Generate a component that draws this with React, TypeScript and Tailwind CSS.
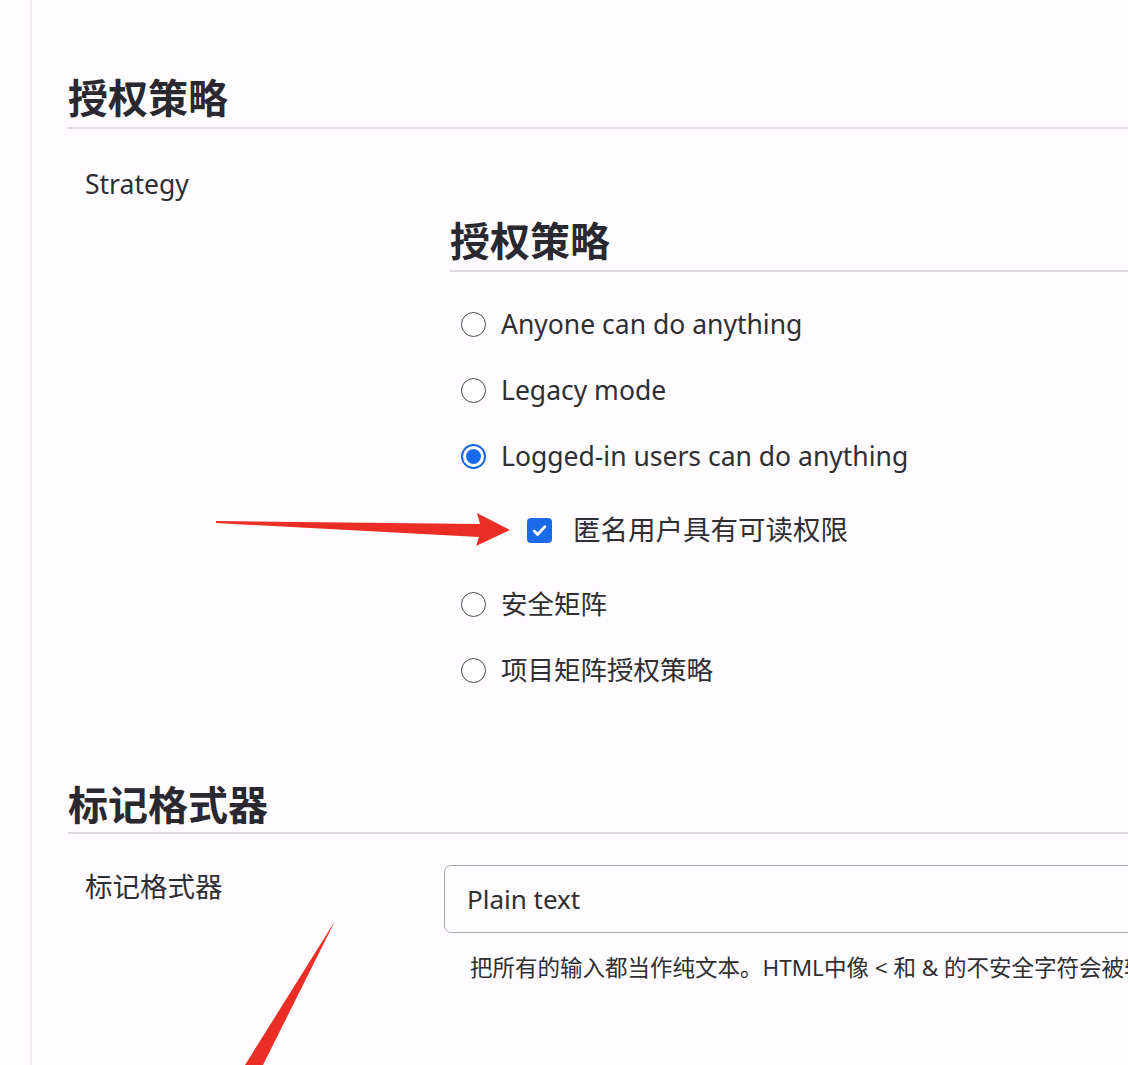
import React from 'react';

const font = { fontFamily: '"Noto Sans", "Noto Sans CJK SC", sans-serif' };

function Radio({ checked = false }: { checked?: boolean }) {
  if (checked) {
    return (
      <span className="w-[25px] h-[25px] rounded-full border-[2px] border-[#1565e0] bg-white flex items-center justify-center shrink-0">
        <span className="w-[15px] h-[15px] rounded-full bg-[#1769ea]" />
      </span>
    );
  }
  return <span className="w-[25px] h-[25px] rounded-full border-[1.5px] border-[#4a4a50] bg-white shrink-0" />;
}

function Checkbox() {
  return (
    <span className="w-[25px] h-[25px] rounded-[4px] bg-[#1a6be8] flex items-center justify-center shrink-0">
      <svg width="17" height="17" viewBox="0 0 16 16" fill="none">
        <path d="M3 8.5l3.2 3.2L13 4.5" stroke="white" strokeWidth="2.6" strokeLinecap="round" strokeLinejoin="round" />
      </svg>
    </span>
  );
}

function RadioRow({ label, checked }: { label: string; checked?: boolean }) {
  return (
    <div className="h-[66px] flex items-center pl-[11px] gap-[15px]">
      <Radio checked={checked} />
      <span className="text-[26.5px] text-[#2f2e33] leading-none">{label}</span>
    </div>
  );
}

function SectionHeading({ children, pb = 'pb-[5px]' }: { children: React.ReactNode; pb?: string }) {
  return (
    <h2 className={`text-[40px] font-bold leading-[48px] text-[#2a2830] border-b-2 border-[#dcdae0] ${pb}`}>
      {children}
    </h2>
  );
}

export default function App() {
  const strategies = ['Anyone can do anything', 'Legacy mode', 'Logged-in users can do anything'];

  return (
    <div className="relative w-full h-[1065px] overflow-hidden bg-[#fefcfe]" style={font}>
      <div className="ml-[30px] border-l-2 border-[#eeecf1] h-full pl-[36px] w-[1300px]">
        {/* 授权策略 */}
        <div className="pt-[74px]">
          <SectionHeading>授权策略</SectionHeading>
          <div className="flex">
            <div className="w-[376px] shrink-0 pl-[17px] pt-[37px] text-[26.5px] leading-[36px] text-[#2f2e33]">Strategy</div>
            <div className="flex-1 pt-[88px]">
              <div className="pl-[6px]">
                <SectionHeading>授权策略</SectionHeading>
                <div className="pt-[19px]">
                  {strategies.map((s, i) => (
                    <RadioRow key={s} label={s} checked={i === 2} />
                  ))}
                  <div className="h-[82px] flex items-center pl-[77px] gap-[21px]">
                    <Checkbox />
                    <span className="text-[27.5px] text-[#2f2e33] leading-none">匿名用户具有可读权限</span>
                  </div>
                  <RadioRow label="安全矩阵" />
                  <RadioRow label="项目矩阵授权策略" />
                </div>
              </div>
            </div>
          </div>
        </div>

        {/* 标记格式器 */}
        <div className="pt-[78px]">
          <SectionHeading pb="pb-[3px]">标记格式器</SectionHeading>
          <div className="flex">
            <div className="w-[376px] shrink-0 pl-[17px] pt-[35px] text-[27.5px] leading-[36px] text-[#2f2e33]">标记格式器</div>
            <div className="flex-1 pt-[31px]">
              <div className="h-[68px] w-[900px] border-[1.5px] border-[#a9a8b0] rounded-[7px] bg-[#fefcfe] flex items-center pl-[22px] text-[26px] text-[#2f2e33]">
                Plain text
              </div>
              <div className="pt-[20px] pl-[26px] text-[22.5px] leading-[30px] text-[#2f2e33] whitespace-nowrap">
                把所有的输入都当作纯文本。HTML中像 &lt; 和 &amp; 的不安全字符会被转换为其对应的字符实体。
              </div>
            </div>
          </div>
        </div>
      </div>

      {/* annotation arrows */}
      <svg className="absolute inset-0 pointer-events-none" width="1128" height="1065" viewBox="0 0 1128 1065">
        <polygon
          points="216,521 480,524 477,513 510,530 476,546 479,537 216,523"
          fill="#ea2e26"
        />
        <polygon points="335,921 263,1065 245,1065" fill="#ea2e26" />
      </svg>
    </div>
  );
}
